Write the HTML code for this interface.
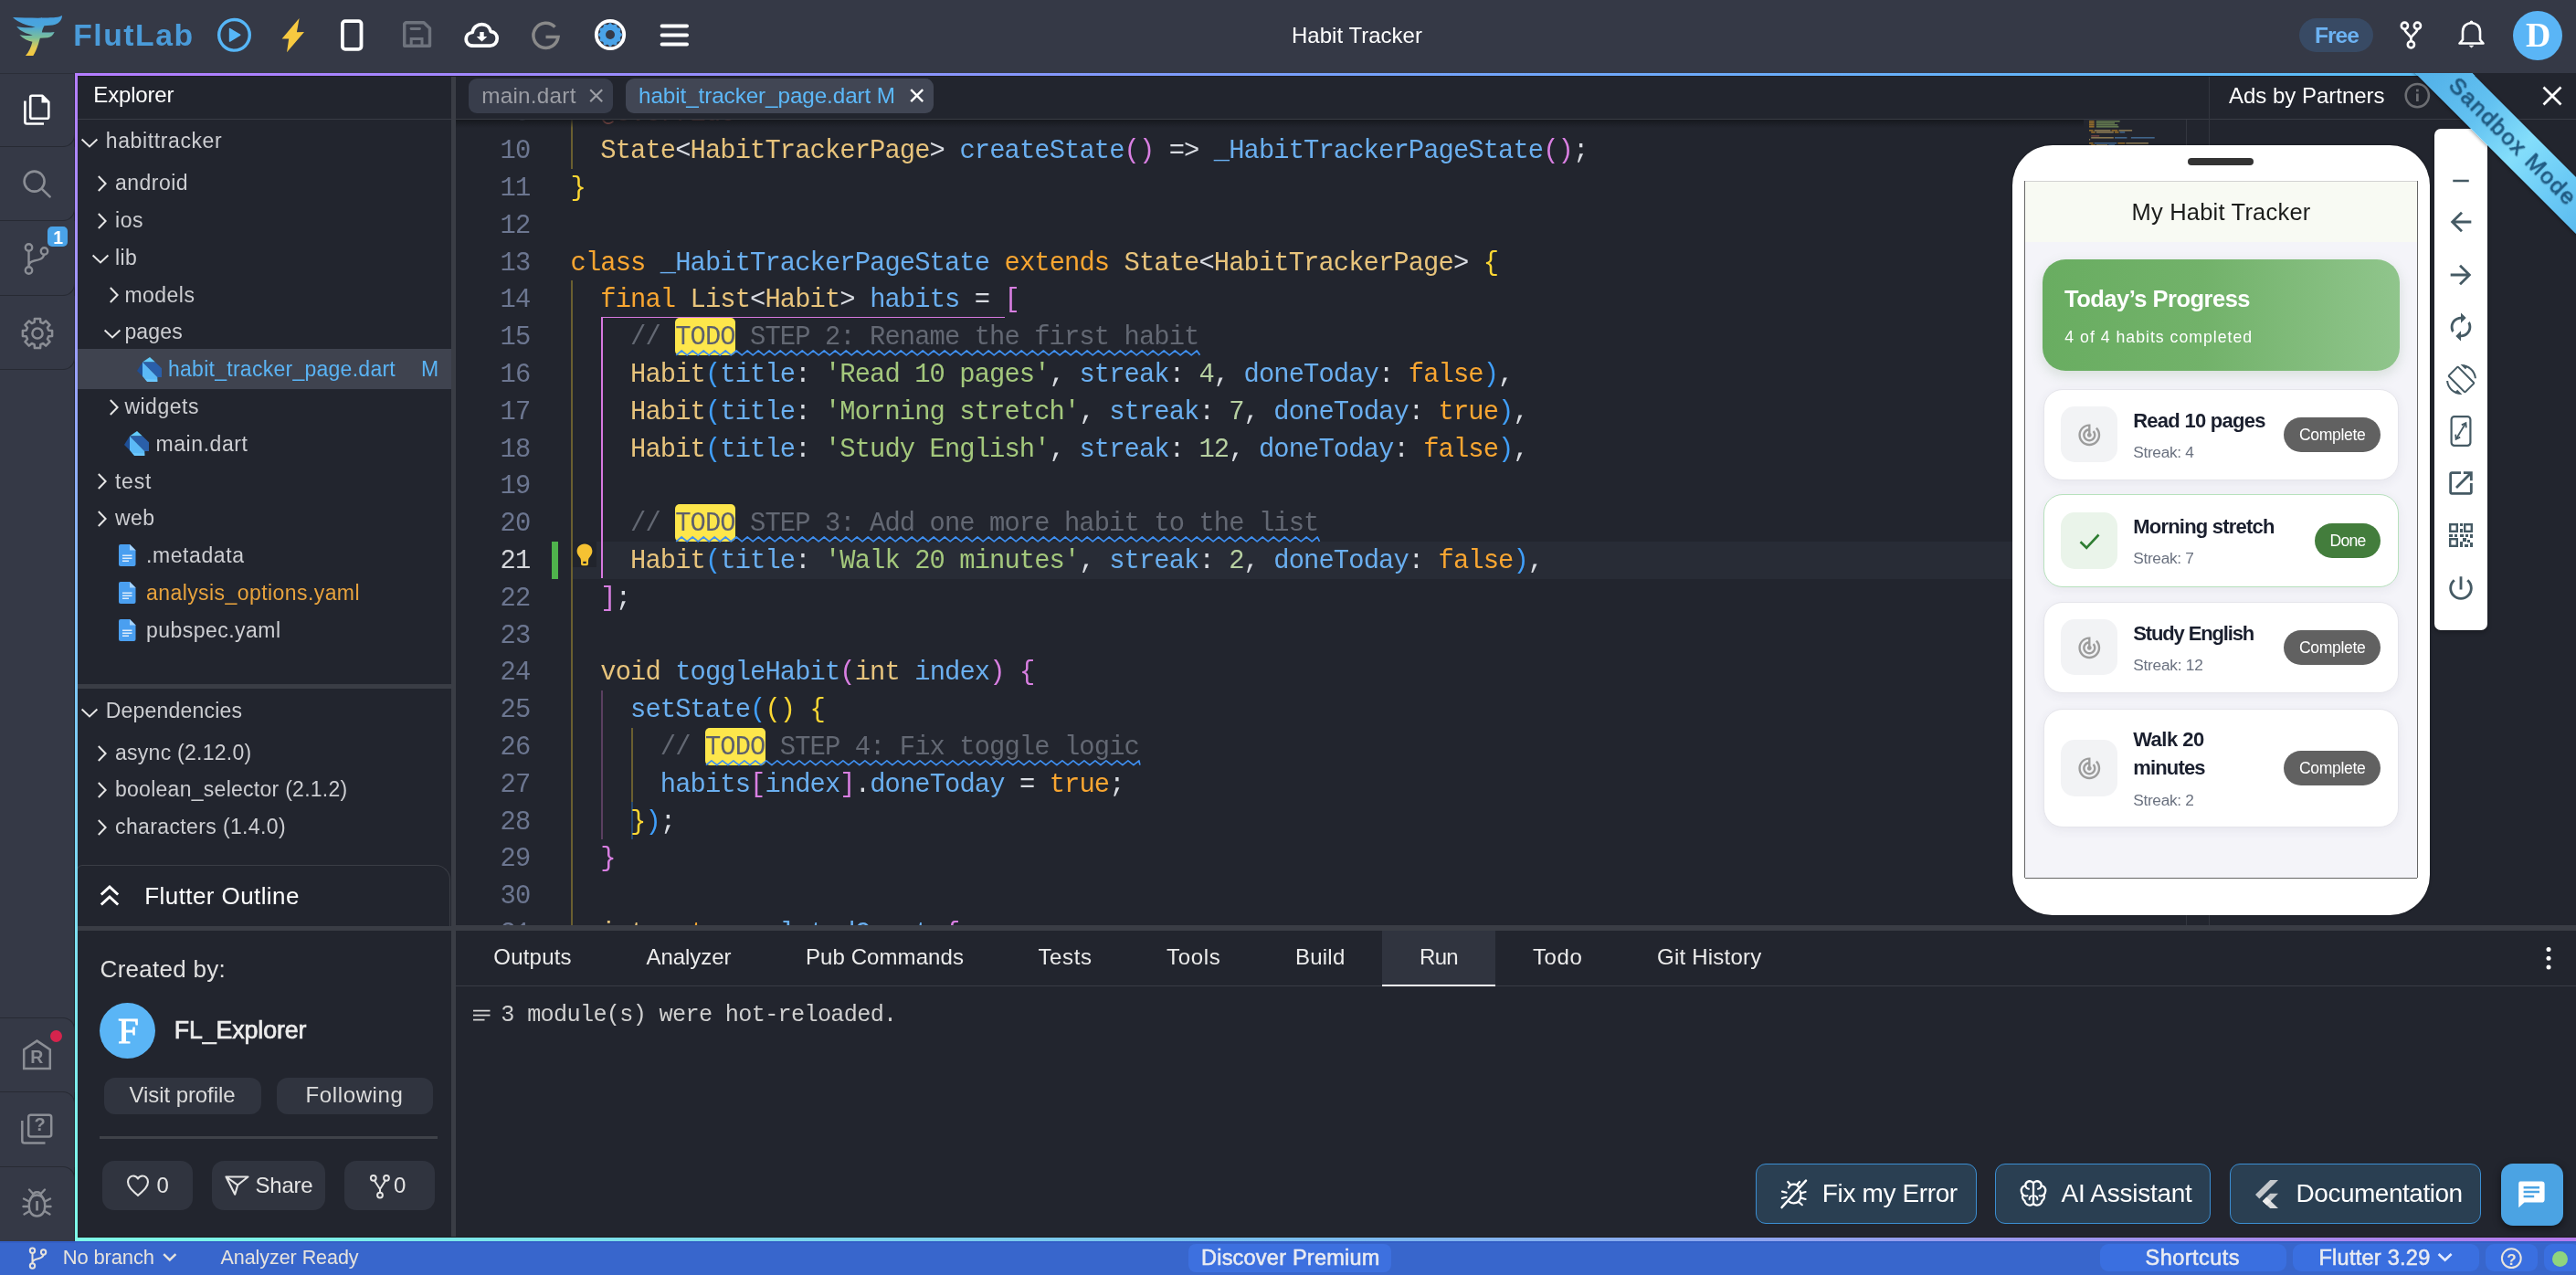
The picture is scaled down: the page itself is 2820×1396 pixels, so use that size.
<!DOCTYPE html>
<html><head><meta charset="utf-8"><title>FlutLab - Habit Tracker</title>
<style>
html,body{margin:0;padding:0;}
body{width:2820px;height:1396px;overflow:hidden;background:#22252e;position:relative;font-family:"Liberation Sans",sans-serif;}
.t{position:absolute;white-space:pre;line-height:1;}
.b{position:absolute;display:block;}
#root{position:absolute;left:0;top:0;width:2820px;height:1396px;overflow:hidden;will-change:transform;}

</style></head><body>
<div id="root">
<!-- p_top -->
<div class="b" style="left:0.0px;top:0.0px;width:2820.0px;height:80.0px;background:#353946;"></div>
<svg class="b" style="left:0.0px;top:0.0px;" width="80.0" height="80.0" viewBox="0 0 858.4 858.4"><defs><linearGradient id="lg" x1="0" y1="0" x2="0" y2="1"><stop offset="0" stop-color="#47a0e2"/><stop offset="0.25" stop-color="#4aa5dc"/><stop offset="0.55" stop-color="#7cbf9a"/><stop offset="0.8" stop-color="#e3cb55"/><stop offset="1" stop-color="#f8c93e"/></linearGradient></defs>
<path fill="url(#lg)" d="M150,205 C320,212 560,214 650,205 C690,200 715,192 730,183 C728,230 700,270 650,288 C610,300 560,302 520,302 C505,325 497,350 492,380 C545,384 600,380 640,375 C625,412 600,436 560,442 C530,446 500,446 470,447 C455,500 440,570 390,655 L300,655 C340,610 365,550 380,490 C330,480 270,455 230,410 C280,420 330,420 385,412 C310,395 235,365 195,310 C260,325 340,330 415,318 C310,300 210,265 150,205 Z"/></svg>
<div class="t" style="left:80.2px;top:21.8px;font-size:33.70px;color:#4a9bd9;font-weight:700;letter-spacing:1.547px;">FlutLab</div>
<svg class="b" style="left:230.0px;top:12.0px;" width="54.0" height="54.0" viewBox="0 0 54 54"><circle cx="26.5" cy="26.3" r="16.8" fill="none" stroke="#56b6f7" stroke-width="3.4"/><path d="M21.6,19.6 L32.6,26.3 L21.6,33 Z" fill="#56b6f7" stroke="#56b6f7" stroke-width="1.6" stroke-linejoin="round"/></svg>
<svg class="b" style="left:300.0px;top:12.0px;" width="44.0" height="54.0" viewBox="0 0 44 54"><path fill="#f7c940" d="M27.6,8.1 L24.9,23.3 L33,23 L14,45.3 L16.2,30.6 L8.6,30.4 Z"/></svg>
<svg class="b" style="left:366.0px;top:14.0px;" width="40.0" height="50.0" viewBox="0 0 40 50"><rect x="8.9" y="9.1" width="20.6" height="30.7" rx="3" fill="none" stroke="#fff" stroke-width="3.8"/></svg>
<svg class="b" style="left:436.0px;top:18.0px;" width="42.0" height="40.0" viewBox="0 0 42 40"><path fill="none" stroke="#6e737d" stroke-width="3.4" stroke-linejoin="round" d="M8.2,6.7 L28,6.7 L34.5,13 L34.5,32.3 L6.7,32.3 L6.7,8.2 Z"/><path d="M14,13.5 L23.5,13.5" stroke="#6e737d" stroke-width="2.8" stroke-linecap="round"/><path fill="none" stroke="#6e737d" stroke-width="3" d="M14.2,32 L14.2,24.5 L26,24.5 L26,32"/></svg>
<svg class="b" style="left:502.0px;top:18.0px;" width="52.0" height="40.0" viewBox="0 0 52 40"><path fill="none" stroke="#fff" stroke-width="3.7" stroke-linejoin="round" d="M16.5,32.2 C10.5,32.2 8.2,28.5 8.2,25 C8.2,21 11,17.8 15.2,17.5 C16,12 20.5,8.7 25.5,8.7 C30.5,8.7 34.3,12 35.3,16.6 C39.5,16.8 42.2,20 42.2,24 C42.2,28.5 39,32.2 34.5,32.2 Z"/><path fill="#fff" d="M23.3,17 L27.7,17 L27.7,22 L31.3,22 L25.5,27.6 L19.7,22 L23.3,22 Z"/></svg>
<svg class="b" style="left:576.0px;top:19.5px;" width="44.0" height="42.0" viewBox="0 0 44 42"><path fill="none" stroke="#898989" stroke-width="3.5" d="M31.5,9.6 A13.6,13.6 0 1 0 35,20.6 L21.5,20.6"/></svg>
<svg class="b" style="left:647.6px;top:18.3px;" width="40.0" height="40.0" viewBox="0 0 40 40"><circle cx="20" cy="20" r="15.2" fill="none" stroke="#fff" stroke-width="3.8"/><path d="M32.87,19.07 L32.87,20.93 L31.10,22.13 L30.68,23.70 L31.61,25.63 L30.68,27.24 L28.54,27.39 L27.39,28.54 L27.24,30.68 L25.63,31.61 L23.70,30.68 L22.13,31.10 L20.93,32.87 L19.07,32.87 L17.87,31.10 L16.30,30.68 L14.37,31.61 L12.76,30.68 L12.61,28.54 L11.46,27.39 L9.32,27.24 L8.39,25.63 L9.32,23.70 L8.90,22.13 L7.13,20.93 L7.13,19.07 L8.90,17.87 L9.32,16.30 L8.39,14.37 L9.32,12.76 L11.46,12.61 L12.61,11.46 L12.76,9.32 L14.37,8.39 L16.30,9.32 L17.87,8.90 L19.07,7.13 L20.93,7.13 L22.13,8.90 L23.70,9.32 L25.63,8.39 L27.24,9.32 L27.39,11.46 L28.54,12.61 L30.68,12.76 L31.61,14.37 L30.68,16.30 L31.10,17.87 Z" fill="#4aa3e8"/><circle cx="20" cy="20" r="5" fill="#353946"/></svg>
<svg class="b" style="left:718.0px;top:22.0px;" width="42.0" height="34.0" viewBox="0 0 42 34"><path stroke="#fff" stroke-width="4" stroke-linecap="round" d="M6.6,6.5 L34,6.5 M6.6,16.4 L34,16.4 M6.6,26.4 L34,26.4"/></svg>
<div class="t" style="left:1414.0px;top:27.3px;font-size:24.00px;color:#fff;letter-spacing:0.022px;">Habit Tracker</div>
<div class="b" style="left:2517.0px;top:20.0px;width:81.0px;height:37.0px;background:#384a64;border-radius:19px;"></div>
<div class="t" style="left:2534.0px;top:27.3px;font-size:24.50px;color:#6cb2f2;font-weight:700;letter-spacing:-0.938px;">Free</div>
<svg class="b" style="left:2622.0px;top:18.0px;" width="36.0" height="42.0" viewBox="0 0 36 42"><g fill="none" stroke="#fff" stroke-width="2.6"><circle cx="10.4" cy="10.2" r="3.6"/><circle cx="24.4" cy="10.2" r="3.6"/><circle cx="17.4" cy="30.8" r="3.6"/><path d="M10.4,13.8 C10.6,18.5 17.4,19.5 17.4,24.6 M24.4,13.8 C24.2,18.5 17.4,19.5 17.4,24.6 L17.4,27.2"/></g></svg>
<svg class="b" style="left:2686.0px;top:18.0px;" width="40.0" height="42.0" viewBox="0 0 40 42"><path fill="none" stroke="#fff" stroke-width="2.6" stroke-linejoin="round" d="M6.5,29.5 L32.5,29.5 L29,25.5 L29,16.5 C29,11 25,7.2 19.5,7.2 C14,7.2 10,11 10,16.5 L10,25.5 Z"/><circle cx="19.5" cy="6.3" r="1.8" fill="#fff"/><path d="M17.5,32.2 L21.5,32.2 L19.5,33.8 Z" fill="#fff" stroke="#fff" stroke-width="1"/></svg>
<div class="b" style="left:2750.6px;top:11.6px;width:54.8px;height:54.8px;background:#5ab5f6;border-radius:50%;"></div>
<div class="t" style="left:2765.0px;top:19.9px;font-size:37.80px;color:#fff;font-weight:700;font-family:'Liberation Serif', serif;">D</div>
<!-- p_side -->
<div class="b" style="left:0.0px;top:80.0px;width:82.0px;height:1279.0px;background:#353946;"></div>
<div class="b" style="left:0.0px;top:80.0px;width:82.0px;height:1.0px;background:#2b2e38;"></div>
<div class="b" style="left:81.0px;top:80.0px;width:1.0px;height:1279.0px;background:#202228;"></div>
<div class="b" style="left:-2px;top:80.0px;width:82px;height:79.5px;border:1px solid #272a33;border-top:none;border-bottom-right-radius:13px;box-sizing:content-box"></div>
<div class="b" style="left:-2px;top:160.5px;width:82px;height:80.5px;border:1px solid #272a33;border-top:none;border-bottom-right-radius:13px;box-sizing:content-box"></div>
<div class="b" style="left:-2px;top:242.0px;width:82px;height:80.5px;border:1px solid #272a33;border-top:none;border-bottom-right-radius:13px;box-sizing:content-box"></div>
<div class="b" style="left:-2px;top:323.5px;width:82px;height:80.5px;border:1px solid #272a33;border-top:none;border-bottom-right-radius:13px;box-sizing:content-box"></div>
<div class="b" style="left:-2px;top:1113.5px;width:82px;height:81.0px;border:1px solid #272a33;border-bottom:none;border-top-right-radius:13px;box-sizing:content-box"></div>
<div class="b" style="left:-2px;top:1194.5px;width:82px;height:82.0px;border:1px solid #272a33;border-bottom:none;border-top-right-radius:13px;box-sizing:content-box"></div>
<div class="b" style="left:-2px;top:1276.5px;width:82px;height:85.5px;border:1px solid #272a33;border-bottom:none;border-top-right-radius:13px;box-sizing:content-box"></div>
<svg class="b" style="left:22.0px;top:100.0px;" width="40.0" height="40.0" viewBox="0 0 40 40"><g fill="none" stroke="#fff" stroke-width="2.6" stroke-linejoin="round"><path d="M13,4.8 L24.5,4.8 L31.3,11.6 L31.3,28 Q31.3,29.8 29.5,29.8 L13,29.8 Q11.2,29.8 11.2,28 L11.2,6.6 Q11.2,4.8 13,4.8 Z"/><path d="M5.4,10.5 L5.4,33.5 Q5.4,35.5 7.4,35.5 L26,35.5"/></g><path d="M23.5,4.8 L31.3,12.6 L23.5,12.6 Z" fill="#fff"/></svg>
<svg class="b" style="left:20.0px;top:182.0px;" width="40.0" height="40.0" viewBox="0 0 40 40"><circle cx="17.6" cy="16.6" r="11" fill="none" stroke="#8b8e95" stroke-width="2.6"/><path d="M25.6,24.6 L34.6,33.4" stroke="#8b8e95" stroke-width="2.6" stroke-linecap="round"/></svg>
<svg class="b" style="left:20.0px;top:262.0px;" width="40.0" height="42.0" viewBox="0 0 40 42"><g fill="none" stroke="#8b8e95" stroke-width="2.4"><circle cx="11.5" cy="9" r="3.7"/><circle cx="11.5" cy="34" r="3.7"/><circle cx="28.5" cy="13" r="3.7"/><path d="M11.5,12.7 L11.5,30.3 M28.2,16.7 C27.5,21.5 23,22.5 17.5,23.5 C13.5,24.3 11.8,26 11.5,29"/></g></svg>
<div class="b" style="left:52.0px;top:248.0px;width:22.0px;height:22.0px;background:#4aa3e8;border-radius:5px;"></div>
<div class="t" style="left:58.2px;top:250.9px;font-size:19.50px;color:#fff;font-weight:700;">1</div>
<svg class="b" style="left:20.5px;top:344.5px;" width="40.0" height="40.0" viewBox="0 0 40 40"><path d="M16.64,7.86 L16.90,3.90 L23.10,3.90 L23.36,7.86 L26.21,9.04 L29.20,6.42 L33.58,10.80 L30.96,13.79 L32.14,16.64 L36.10,16.90 L36.10,23.10 L32.14,23.36 L30.96,26.21 L33.58,29.20 L29.20,33.58 L26.21,30.96 L23.36,32.14 L23.10,36.10 L16.90,36.10 L16.64,32.14 L13.79,30.96 L10.80,33.58 L6.42,29.20 L9.04,26.21 L7.86,23.36 L3.90,23.10 L3.90,16.90 L7.86,16.64 L9.04,13.79 L6.42,10.80 L10.80,6.42 L13.79,9.04 Z" fill="none" stroke="#8b8e95" stroke-width="2.5" stroke-linejoin="round"/><circle cx="20" cy="20" r="5.6" fill="none" stroke="#8b8e95" stroke-width="2.5"/></svg>
<svg class="b" style="left:20.0px;top:1134.0px;" width="42.0" height="42.0" viewBox="0 0 42 42"><path d="M6.2,36 L6.2,15.2 L20.5,5.6 L34.8,15.2 L34.8,36 Z" fill="none" stroke="#8b8e95" stroke-width="2.5"/></svg>
<div class="t" style="left:33.3px;top:1147.5px;font-size:19.50px;color:#8b8e95;font-weight:700;">R</div>
<div class="b" style="left:54.5px;top:1128.0px;width:13.4px;height:13.4px;background:#d6244d;border-radius:50%;"></div>
<svg class="b" style="left:20.0px;top:1216.0px;" width="42.0" height="42.0" viewBox="0 0 42 42"><g fill="none" stroke="#8b8e95" stroke-width="2.5" stroke-linejoin="round"><rect x="11.2" y="4.7" width="25" height="23.8" rx="2.5"/><path d="M4.3,11 L4.3,33 Q4.3,35.6 6.9,35.6 L29.5,35.6"/></g></svg>
<div class="t" style="left:37.6px;top:1220.9px;font-size:20.00px;color:#8b8e95;font-weight:700;">?</div>
<svg class="b" style="left:20.0px;top:1298.0px;" width="42.0" height="40.0" viewBox="0 0 42 40"><g fill="none" stroke="#8b8e95" stroke-width="2.4" stroke-linecap="round"><path d="M20.5,10.5 C26.5,10.5 29.2,15 29.2,22.5 C29.2,29.5 25.5,33.5 20.5,33.5 C15.5,33.5 11.8,29.5 11.8,22.5 C11.8,15 14.5,10.5 20.5,10.5 Z"/><path d="M15.5,11.8 C16,8.5 18,7.2 20.5,7.2 C23,7.2 25,8.5 25.5,11.8"/><path d="M15.5,8.2 L12,4.5 M25.5,8.2 L29,4.5 M11.8,17.5 L6,14.5 M29.2,17.5 L35,14.5 M11.5,23 L5.5,23 M29.5,23 L35.5,23 M12.3,28 L6.5,31.5 M28.7,28 L34.5,31.5"/></g><rect x="19.2" y="17" width="2.7" height="10.5" fill="#8b8e95"/></svg>
<div class="b" style="left:85.0px;top:83.0px;width:409.0px;height:1272.0px;background:#22252e;"></div>
<div class="b" style="left:494.0px;top:84.0px;width:4.5px;height:1271.0px;background:#3a3d45;"></div>
<div class="t" style="left:102.3px;top:92.1px;font-size:24.00px;color:#fff;letter-spacing:-0.171px;">Explorer</div>
<div class="b" style="left:85.0px;top:129.5px;width:409.0px;height:1.5px;background:#3a3d45;"></div>
<svg class="b" style="left:87.3px;top:149.0px;" width="22.0" height="16.0" viewBox="0 0 22 16"><path d="M2.6,3.6 L11,11.4 L19.4,3.6" fill="none" stroke="#e6e6e6" stroke-width="2"/></svg>
<div class="t" style="left:115.8px;top:143.4px;font-size:23.00px;color:#cdced2;letter-spacing:0.611px;">habittracker</div>
<svg class="b" style="left:105.4px;top:190.0px;" width="14.0" height="22.0" viewBox="0 0 14 22"><path d="M2.8,3 L10.6,11 L2.8,19" fill="none" stroke="#e6e6e6" stroke-width="2"/></svg>
<div class="t" style="left:126.0px;top:189.1px;font-size:23.00px;color:#cdced2;letter-spacing:0.468px;">android</div>
<svg class="b" style="left:105.4px;top:230.8px;" width="14.0" height="22.0" viewBox="0 0 14 22"><path d="M2.8,3 L10.6,11 L2.8,19" fill="none" stroke="#e6e6e6" stroke-width="2"/></svg>
<div class="t" style="left:126.0px;top:229.9px;font-size:23.00px;color:#cdced2;letter-spacing:0.533px;">ios</div>
<svg class="b" style="left:99.2px;top:276.1px;" width="22.0" height="16.0" viewBox="0 0 22 16"><path d="M2.6,3.6 L11,11.4 L19.4,3.6" fill="none" stroke="#e6e6e6" stroke-width="2"/></svg>
<div class="t" style="left:126.0px;top:270.7px;font-size:23.00px;color:#cdced2;letter-spacing:0.329px;">lib</div>
<svg class="b" style="left:117.7px;top:312.4px;" width="14.0" height="22.0" viewBox="0 0 14 22"><path d="M2.8,3 L10.6,11 L2.8,19" fill="none" stroke="#e6e6e6" stroke-width="2"/></svg>
<div class="t" style="left:136.4px;top:311.5px;font-size:23.00px;color:#cdced2;letter-spacing:0.476px;">models</div>
<svg class="b" style="left:111.5px;top:357.7px;" width="22.0" height="16.0" viewBox="0 0 22 16"><path d="M2.6,3.6 L11,11.4 L19.4,3.6" fill="none" stroke="#e6e6e6" stroke-width="2"/></svg>
<div class="t" style="left:136.4px;top:352.3px;font-size:23.00px;color:#cdced2;letter-spacing:0.167px;">pages</div>
<div class="b" style="left:85.0px;top:382.0px;width:409.0px;height:43.5px;background:#3f434f;"></div>
<svg class="b" style="left:150.2px;top:391.0px;" width="27.0" height="27.0" viewBox="0 0 27 27"><polygon points="6,5.5 14,0 20,5.5" fill="#62cbfa"/>
<polygon points="6,5.5 20,5.5 27,12.3 27,22 22.3,22" fill="#2a5fa9"/>
<polygon points="0,15 6,5.5 6,21" fill="#1f4f95"/>
<polygon points="6,5.5 22.3,22 22.3,27 11.2,27 6,21" fill="#5bb9f6"/>
<polygon points="6,21 11.2,27 22.3,27 22.3,24.5 9,24" fill="#72cdff" opacity="0.7"/></svg>
<div class="t" style="left:184.0px;top:393.1px;font-size:23.00px;color:#5ab4f5;letter-spacing:0.264px;">habit_tracker_page.dart</div>
<div class="t" style="left:461.0px;top:393.1px;font-size:23.00px;color:#5ab4f5;">M</div>
<svg class="b" style="left:117.7px;top:434.8px;" width="14.0" height="22.0" viewBox="0 0 14 22"><path d="M2.8,3 L10.6,11 L2.8,19" fill="none" stroke="#e6e6e6" stroke-width="2"/></svg>
<div class="t" style="left:136.4px;top:433.9px;font-size:23.00px;color:#cdced2;letter-spacing:0.502px;">widgets</div>
<svg class="b" style="left:136.2px;top:472.0px;" width="27.0" height="27.0" viewBox="0 0 27 27"><polygon points="6,5.5 14,0 20,5.5" fill="#62cbfa"/>
<polygon points="6,5.5 20,5.5 27,12.3 27,22 22.3,22" fill="#2a5fa9"/>
<polygon points="0,15 6,5.5 6,21" fill="#1f4f95"/>
<polygon points="6,5.5 22.3,22 22.3,27 11.2,27 6,21" fill="#5bb9f6"/>
<polygon points="6,21 11.2,27 22.3,27 22.3,24.5 9,24" fill="#72cdff" opacity="0.7"/></svg>
<div class="t" style="left:170.5px;top:474.7px;font-size:23.00px;color:#cdced2;letter-spacing:0.569px;">main.dart</div>
<svg class="b" style="left:105.4px;top:516.4px;" width="14.0" height="22.0" viewBox="0 0 14 22"><path d="M2.8,3 L10.6,11 L2.8,19" fill="none" stroke="#e6e6e6" stroke-width="2"/></svg>
<div class="t" style="left:126.0px;top:515.5px;font-size:23.00px;color:#cdced2;letter-spacing:0.732px;">test</div>
<svg class="b" style="left:105.4px;top:557.2px;" width="14.0" height="22.0" viewBox="0 0 14 22"><path d="M2.8,3 L10.6,11 L2.8,19" fill="none" stroke="#e6e6e6" stroke-width="2"/></svg>
<div class="t" style="left:126.0px;top:556.3px;font-size:23.00px;color:#cdced2;letter-spacing:0.436px;">web</div>
<svg class="b" style="left:130.3px;top:596.3px;" width="19.0" height="24.0" viewBox="0 0 19 24"><path d="M2,0 L12,0 L18.5,6.5 L18.5,22 Q18.5,24 16.5,24 L2,24 Q0,24 0,22 L0,2 Q0,0 2,0 Z" fill="#4a9ff0"/>
<path d="M12,0 L18.5,6.5 L12,6.5 Z" fill="#a8d4fa"/>
<path d="M4,12.2 L14.5,12.2 M4,15.2 L14.5,15.2 M4,18.2 L11,18.2" stroke="#dcecfb" stroke-width="1.5"/></svg>
<div class="t" style="left:160.0px;top:597.1px;font-size:23.00px;color:#cdced2;letter-spacing:0.579px;">.metadata</div>
<svg class="b" style="left:130.3px;top:637.1px;" width="19.0" height="24.0" viewBox="0 0 19 24"><path d="M2,0 L12,0 L18.5,6.5 L18.5,22 Q18.5,24 16.5,24 L2,24 Q0,24 0,22 L0,2 Q0,0 2,0 Z" fill="#4a9ff0"/>
<path d="M12,0 L18.5,6.5 L12,6.5 Z" fill="#a8d4fa"/>
<path d="M4,12.2 L14.5,12.2 M4,15.2 L14.5,15.2 M4,18.2 L11,18.2" stroke="#dcecfb" stroke-width="1.5"/></svg>
<div class="t" style="left:160.0px;top:637.9px;font-size:23.00px;color:#e8a33d;letter-spacing:0.428px;">analysis_options.yaml</div>
<svg class="b" style="left:130.3px;top:677.9px;" width="19.0" height="24.0" viewBox="0 0 19 24"><path d="M2,0 L12,0 L18.5,6.5 L18.5,22 Q18.5,24 16.5,24 L2,24 Q0,24 0,22 L0,2 Q0,0 2,0 Z" fill="#4a9ff0"/>
<path d="M12,0 L18.5,6.5 L12,6.5 Z" fill="#a8d4fa"/>
<path d="M4,12.2 L14.5,12.2 M4,15.2 L14.5,15.2 M4,18.2 L11,18.2" stroke="#dcecfb" stroke-width="1.5"/></svg>
<div class="t" style="left:160.0px;top:678.7px;font-size:23.00px;color:#cdced2;letter-spacing:0.466px;">pubspec.yaml</div>
<div class="b" style="left:85.0px;top:748.5px;width:409.0px;height:5.5px;background:#3a3d45;"></div>
<svg class="b" style="left:87.3px;top:773.0px;" width="22.0" height="16.0" viewBox="0 0 22 16"><path d="M2.6,3.6 L11,11.4 L19.4,3.6" fill="none" stroke="#e6e6e6" stroke-width="2"/></svg>
<div class="t" style="left:115.8px;top:767.1px;font-size:23.00px;color:#cdced2;letter-spacing:0.204px;">Dependencies</div>
<svg class="b" style="left:105.4px;top:813.5px;" width="14.0" height="22.0" viewBox="0 0 14 22"><path d="M2.8,3 L10.6,11 L2.8,19" fill="none" stroke="#e6e6e6" stroke-width="2"/></svg>
<div class="t" style="left:126.0px;top:812.6px;font-size:23.00px;color:#cdced2;letter-spacing:0.269px;">async (2.12.0)</div>
<svg class="b" style="left:105.4px;top:854.3px;" width="14.0" height="22.0" viewBox="0 0 14 22"><path d="M2.8,3 L10.6,11 L2.8,19" fill="none" stroke="#e6e6e6" stroke-width="2"/></svg>
<div class="t" style="left:126.0px;top:853.4px;font-size:23.00px;color:#cdced2;letter-spacing:0.269px;">boolean_selector (2.1.2)</div>
<svg class="b" style="left:105.4px;top:895.1px;" width="14.0" height="22.0" viewBox="0 0 14 22"><path d="M2.8,3 L10.6,11 L2.8,19" fill="none" stroke="#e6e6e6" stroke-width="2"/></svg>
<div class="t" style="left:126.0px;top:894.2px;font-size:23.00px;color:#cdced2;letter-spacing:0.376px;">characters (1.4.0)</div>
<div class="b" style="left:84px;top:947px;width:409px;height:70px;border:1.5px solid #3a3d45;border-bottom:none;border-top-right-radius:16px;border-top-left-radius:6px;box-sizing:border-box"></div>
<svg class="b" style="left:108.0px;top:966.5px;" width="24.0" height="30.0" viewBox="0 0 24 30"><path d="M2.8,12.5 L12,4 L21.2,12.5 M2.8,23.5 L12,15 L21.2,23.5" fill="none" stroke="#fff" stroke-width="3"/></svg>
<div class="t" style="left:158.3px;top:968.3px;font-size:26.00px;color:#fff;letter-spacing:0.414px;">Flutter Outline</div>
<div class="b" style="left:85.0px;top:1014.0px;width:409.0px;height:5.0px;background:#3a3d45;"></div>
<div class="t" style="left:109.6px;top:1047.8px;font-size:26.00px;color:#e2e2e2;letter-spacing:0.281px;">Created by:</div>
<div class="b" style="left:109.2px;top:1098.0px;width:61.0px;height:61.0px;background:#5ab5f6;border-radius:50%;"></div>
<div class="t" style="left:129.0px;top:1108.0px;font-size:41.00px;color:#fff;font-family:'Liberation Serif', serif;-webkit-text-stroke:0.9px #fff;">F</div>
<div class="t" style="left:190.8px;top:1115.1px;font-size:26.80px;color:#ececec;letter-spacing:-0.134px;-webkit-text-stroke:0.7px #ececec;">FL_Explorer</div>
<div class="b" style="left:114.0px;top:1179.8px;width:171.5px;height:40.3px;background:#30343f;border-radius:12px;"></div>
<div class="t" style="left:141.5px;top:1187.3px;font-size:24.00px;color:#dcdcdc;letter-spacing:-0.072px;">Visit profile</div>
<div class="b" style="left:303.0px;top:1179.8px;width:170.5px;height:40.3px;background:#30343f;border-radius:12px;"></div>
<div class="t" style="left:334.5px;top:1186.7px;font-size:24.00px;color:#dcdcdc;letter-spacing:0.624px;">Following</div>
<div class="b" style="left:109.0px;top:1244.3px;width:370.0px;height:3.0px;background:#3f4249;"></div>
<div class="b" style="left:112.0px;top:1271.0px;width:99.0px;height:54.0px;background:#30343f;border-radius:13px;"></div>
<svg class="b" style="left:137.0px;top:1283.0px;" width="30.0" height="30.0" viewBox="0 0 30 30"><path d="M14,26 C8,20.5 3,16.5 3,11 C3,7 6,4.5 9,4.5 C11.2,4.5 13,5.7 14,7.6 C15,5.7 16.8,4.5 19,4.5 C22,4.5 25,7 25,11 C25,16.5 20,20.5 14,26 Z" fill="none" stroke="#e4e4e4" stroke-width="2.1" stroke-linejoin="round"/></svg>
<div class="t" style="left:171.5px;top:1285.7px;font-size:24.00px;color:#e4e4e4;">0</div>
<div class="b" style="left:232.0px;top:1271.0px;width:124.0px;height:54.0px;background:#30343f;border-radius:13px;"></div>
<svg class="b" style="left:244.0px;top:1284.0px;" width="32.0" height="30.0" viewBox="0 0 32 30"><path d="M3.5,4.5 L27.5,4.5 L16.2,13.5 L13.2,23.8 Z M16.2,13.5 L3.5,4.5" fill="none" stroke="#e4e4e4" stroke-width="2.1" stroke-linejoin="round"/></svg>
<div class="t" style="left:279.5px;top:1285.7px;font-size:24.00px;color:#e4e4e4;letter-spacing:-0.209px;">Share</div>
<div class="b" style="left:376.5px;top:1271.0px;width:99.5px;height:54.0px;background:#30343f;border-radius:13px;"></div>
<svg class="b" style="left:402.0px;top:1283.0px;" width="28.0" height="32.0" viewBox="0 0 28 32"><g fill="none" stroke="#e4e4e4" stroke-width="2"><circle cx="6.8" cy="6.8" r="2.9"/><circle cx="21" cy="6.8" r="2.9"/><circle cx="14" cy="25.6" r="2.9"/><path d="M7.8,9.5 L14,19 L20,9.5 M14,18.5 L14,22.7"/></g></svg>
<div class="t" style="left:431.0px;top:1285.7px;font-size:24.00px;color:#e4e4e4;">0</div>
<!-- p_editor -->
<div class="b" style="left:498.5px;top:83px;width:2321.5px;height:930.3px;background:#22252e;overflow:hidden">
<div class="b" style="left:126.5px;top:509.7px;width:1768.0px;height:41.1px;background:#282c36;"></div>
<div class="b" style="left:126.5px;top:37.0px;width:2.0px;height:64.7px;background:#6a5f30;"></div>
<div class="b" style="left:126.5px;top:224.1px;width:2.0px;height:712.9px;background:#6a5f30;"></div>
<div class="b" style="left:159.3px;top:672.9px;width:2.0px;height:163.2px;background:#5a3f60;"></div>
<div class="b" style="left:192.0px;top:713.7px;width:2.0px;height:81.6px;background:#6a5f30;"></div>
<div class="b" style="left:192.0px;top:795.3px;width:2.0px;height:40.8px;background:#274a72;"></div>
<div class="b" style="left:159.3px;top:264.1px;width:2.0px;height:286.4px;background:#d678de;"></div>
<div class="b" style="left:159.3px;top:264.1px;width:441.8px;height:1.2px;background:#d678de;"></div>
<div class="b" style="left:105.5px;top:509.7px;width:6.5px;height:41.1px;background:#4fb34c;"></div>
<div class="b" style="left:128.5px;top:509.7px;width:26.0px;height:28.0px;background:#21242c;"></div>
<svg class="b" style="left:130.5px;top:510.9px" width="22" height="28" viewBox="0 0 22 28"><path d="M11,1.5 C5.8,1.5 2.6,5.2 2.6,9.6 C2.6,12.6 4.2,14.6 5.6,16.2 C6.6,17.4 6.8,18.2 6.8,19.2 L15.2,19.2 C15.2,18.2 15.4,17.4 16.4,16.2 C17.8,14.6 19.4,12.6 19.4,9.6 C19.4,5.2 16.2,1.5 11,1.5 Z" fill="#f6c232"/><path d="M7,19 L7,23.5 Q7,25.3 8.8,25.3 L13.2,25.3 Q15,25.3 15,23.5 L15,19 Z M9.3,20.8 L12.7,20.8 L12.7,23 L9.3,23 Z" fill="#f6c232" fill-rule="evenodd"/></svg>
<div class="t" style="left:65.4px;top:28.3px;font-size:28.80px;color:#6c7690;font-family:'Liberation Mono', monospace;letter-spacing:-0.903px;">9</div>
<div class="t" style="left:126.0px;top:28.3px;font-size:28.80px;font-family:'Liberation Mono', monospace;color:#d9dce2;letter-spacing:-0.903px">  <span style="color:#b5645b">@override</span></div>
<div class="t" style="left:49.0px;top:69.1px;font-size:28.80px;color:#6c7690;font-family:'Liberation Mono', monospace;letter-spacing:-0.903px;">10</div>
<div class="t" style="left:126.0px;top:69.1px;font-size:28.80px;font-family:'Liberation Mono', monospace;color:#d9dce2;letter-spacing:-0.903px">  <span style="color:#e8c47c">State</span><span style="color:#d9dce2">&lt;</span><span style="color:#e8c47c">HabitTrackerPage</span><span style="color:#d9dce2">&gt;</span> <span style="color:#6aaff0">createState</span><span style="color:#d97fe2">()</span><span style="color:#d9dce2"> =&gt; </span><span style="color:#6aaff0">_HabitTrackerPageState</span><span style="color:#d97fe2">()</span><span style="color:#d9dce2">;</span></div>
<div class="t" style="left:49.0px;top:109.9px;font-size:28.80px;color:#6c7690;font-family:'Liberation Mono', monospace;letter-spacing:-0.903px;">11</div>
<div class="t" style="left:126.0px;top:109.9px;font-size:28.80px;font-family:'Liberation Mono', monospace;color:#d9dce2;letter-spacing:-0.903px"><span style="color:#fcd733">}</span></div>
<div class="t" style="left:49.0px;top:150.7px;font-size:28.80px;color:#6c7690;font-family:'Liberation Mono', monospace;letter-spacing:-0.903px;">12</div>
<div class="t" style="left:49.0px;top:191.5px;font-size:28.80px;color:#6c7690;font-family:'Liberation Mono', monospace;letter-spacing:-0.903px;">13</div>
<div class="t" style="left:126.0px;top:191.5px;font-size:28.80px;font-family:'Liberation Mono', monospace;color:#d9dce2;letter-spacing:-0.903px"><span style="color:#f9a631">class</span> <span style="color:#6aaff0">_HabitTrackerPageState</span> <span style="color:#f9a631">extends</span> <span style="color:#e8c47c">State</span><span style="color:#d9dce2">&lt;</span><span style="color:#e8c47c">HabitTrackerPage</span><span style="color:#d9dce2">&gt;</span> <span style="color:#fcd733">{</span></div>
<div class="t" style="left:49.0px;top:232.3px;font-size:28.80px;color:#6c7690;font-family:'Liberation Mono', monospace;letter-spacing:-0.903px;">14</div>
<div class="t" style="left:126.0px;top:232.3px;font-size:28.80px;font-family:'Liberation Mono', monospace;color:#d9dce2;letter-spacing:-0.903px">  <span style="color:#f9a631">final</span> <span style="color:#e8c47c">List</span><span style="color:#d9dce2">&lt;</span><span style="color:#e8c47c">Habit</span><span style="color:#d9dce2">&gt;</span> <span style="color:#6aaff0">habits</span><span style="color:#d9dce2"> = </span><span style="color:#d97fe2">[</span></div>
<div class="t" style="left:49.0px;top:273.1px;font-size:28.80px;color:#6c7690;font-family:'Liberation Mono', monospace;letter-spacing:-0.903px;">15</div>
<div class="b" style="left:240.9px;top:265.2px;width:66.1px;height:40.8px;background:#fde64b;border-radius:5px;"></div>
<div class="t" style="left:126.0px;top:273.1px;font-size:28.80px;font-family:'Liberation Mono', monospace;color:#d9dce2;letter-spacing:-0.903px">    <span style="color:#636873">// </span><span style="color:#5d606c">TODO</span><span style="color:#636873"> STEP 2: Rename the first habit</span></div>
<div class="t" style="left:49.0px;top:313.9px;font-size:28.80px;color:#6c7690;font-family:'Liberation Mono', monospace;letter-spacing:-0.903px;">16</div>
<div class="t" style="left:126.0px;top:313.9px;font-size:28.80px;font-family:'Liberation Mono', monospace;color:#d9dce2;letter-spacing:-0.903px">    <span style="color:#e8c47c">Habit</span><span style="color:#409ffa">(</span><span style="color:#6aaff0">title</span><span style="color:#d9dce2">: </span><span style="color:#a4c87c">'Read 10 pages'</span><span style="color:#d9dce2">, </span><span style="color:#6aaff0">streak</span><span style="color:#d9dce2">: </span><span style="color:#b7d0a1">4</span><span style="color:#d9dce2">, </span><span style="color:#6aaff0">doneToday</span><span style="color:#d9dce2">: </span><span style="color:#f9a631">false</span><span style="color:#409ffa">)</span><span style="color:#d9dce2">,</span></div>
<div class="t" style="left:49.0px;top:354.7px;font-size:28.80px;color:#6c7690;font-family:'Liberation Mono', monospace;letter-spacing:-0.903px;">17</div>
<div class="t" style="left:126.0px;top:354.7px;font-size:28.80px;font-family:'Liberation Mono', monospace;color:#d9dce2;letter-spacing:-0.903px">    <span style="color:#e8c47c">Habit</span><span style="color:#409ffa">(</span><span style="color:#6aaff0">title</span><span style="color:#d9dce2">: </span><span style="color:#a4c87c">'Morning stretch'</span><span style="color:#d9dce2">, </span><span style="color:#6aaff0">streak</span><span style="color:#d9dce2">: </span><span style="color:#b7d0a1">7</span><span style="color:#d9dce2">, </span><span style="color:#6aaff0">doneToday</span><span style="color:#d9dce2">: </span><span style="color:#f9a631">true</span><span style="color:#409ffa">)</span><span style="color:#d9dce2">,</span></div>
<div class="t" style="left:49.0px;top:395.5px;font-size:28.80px;color:#6c7690;font-family:'Liberation Mono', monospace;letter-spacing:-0.903px;">18</div>
<div class="t" style="left:126.0px;top:395.5px;font-size:28.80px;font-family:'Liberation Mono', monospace;color:#d9dce2;letter-spacing:-0.903px">    <span style="color:#e8c47c">Habit</span><span style="color:#409ffa">(</span><span style="color:#6aaff0">title</span><span style="color:#d9dce2">: </span><span style="color:#a4c87c">'Study English'</span><span style="color:#d9dce2">, </span><span style="color:#6aaff0">streak</span><span style="color:#d9dce2">: </span><span style="color:#b7d0a1">12</span><span style="color:#d9dce2">, </span><span style="color:#6aaff0">doneToday</span><span style="color:#d9dce2">: </span><span style="color:#f9a631">false</span><span style="color:#409ffa">)</span><span style="color:#d9dce2">,</span></div>
<div class="t" style="left:49.0px;top:436.3px;font-size:28.80px;color:#6c7690;font-family:'Liberation Mono', monospace;letter-spacing:-0.903px;">19</div>
<div class="t" style="left:49.0px;top:477.1px;font-size:28.80px;color:#6c7690;font-family:'Liberation Mono', monospace;letter-spacing:-0.903px;">20</div>
<div class="b" style="left:240.9px;top:469.2px;width:66.1px;height:40.8px;background:#fde64b;border-radius:5px;"></div>
<div class="t" style="left:126.0px;top:477.1px;font-size:28.80px;font-family:'Liberation Mono', monospace;color:#d9dce2;letter-spacing:-0.903px">    <span style="color:#636873">// </span><span style="color:#5d606c">TODO</span><span style="color:#636873"> STEP 3: Add one more habit to the list</span></div>
<div class="t" style="left:49.0px;top:517.9px;font-size:28.80px;color:#d4d6da;font-family:'Liberation Mono', monospace;letter-spacing:-0.903px;">21</div>
<div class="t" style="left:126.0px;top:517.9px;font-size:28.80px;font-family:'Liberation Mono', monospace;color:#d9dce2;letter-spacing:-0.903px">    <span style="color:#e8c47c">Habit</span><span style="color:#409ffa">(</span><span style="color:#6aaff0">title</span><span style="color:#d9dce2">: </span><span style="color:#a4c87c">'Walk 20 minutes'</span><span style="color:#d9dce2">, </span><span style="color:#6aaff0">streak</span><span style="color:#d9dce2">: </span><span style="color:#b7d0a1">2</span><span style="color:#d9dce2">, </span><span style="color:#6aaff0">doneToday</span><span style="color:#d9dce2">: </span><span style="color:#f9a631">false</span><span style="color:#409ffa">)</span><span style="color:#d9dce2">,</span></div>
<div class="t" style="left:49.0px;top:558.7px;font-size:28.80px;color:#6c7690;font-family:'Liberation Mono', monospace;letter-spacing:-0.903px;">22</div>
<div class="t" style="left:126.0px;top:558.7px;font-size:28.80px;font-family:'Liberation Mono', monospace;color:#d9dce2;letter-spacing:-0.903px">  <span style="color:#d97fe2">]</span><span style="color:#d9dce2">;</span></div>
<div class="t" style="left:49.0px;top:599.5px;font-size:28.80px;color:#6c7690;font-family:'Liberation Mono', monospace;letter-spacing:-0.903px;">23</div>
<div class="t" style="left:49.0px;top:640.3px;font-size:28.80px;color:#6c7690;font-family:'Liberation Mono', monospace;letter-spacing:-0.903px;">24</div>
<div class="t" style="left:126.0px;top:640.3px;font-size:28.80px;font-family:'Liberation Mono', monospace;color:#d9dce2;letter-spacing:-0.903px">  <span style="color:#e8c47c">void</span> <span style="color:#6aaff0">toggleHabit</span><span style="color:#d97fe2">(</span><span style="color:#e8c47c">int</span> <span style="color:#6aaff0">index</span><span style="color:#d97fe2">)</span> <span style="color:#d97fe2">{</span></div>
<div class="t" style="left:49.0px;top:681.1px;font-size:28.80px;color:#6c7690;font-family:'Liberation Mono', monospace;letter-spacing:-0.903px;">25</div>
<div class="t" style="left:126.0px;top:681.1px;font-size:28.80px;font-family:'Liberation Mono', monospace;color:#d9dce2;letter-spacing:-0.903px">    <span style="color:#6aaff0">setState</span><span style="color:#409ffa">(</span><span style="color:#fcd733">()</span> <span style="color:#fcd733">{</span></div>
<div class="t" style="left:49.0px;top:721.9px;font-size:28.80px;color:#6c7690;font-family:'Liberation Mono', monospace;letter-spacing:-0.903px;">26</div>
<div class="b" style="left:273.6px;top:714.0px;width:66.1px;height:40.8px;background:#fde64b;border-radius:5px;"></div>
<div class="t" style="left:126.0px;top:721.9px;font-size:28.80px;font-family:'Liberation Mono', monospace;color:#d9dce2;letter-spacing:-0.903px">      <span style="color:#636873">// </span><span style="color:#5d606c">TODO</span><span style="color:#636873"> STEP 4: Fix toggle logic</span></div>
<div class="t" style="left:49.0px;top:762.7px;font-size:28.80px;color:#6c7690;font-family:'Liberation Mono', monospace;letter-spacing:-0.903px;">27</div>
<div class="t" style="left:126.0px;top:762.7px;font-size:28.80px;font-family:'Liberation Mono', monospace;color:#d9dce2;letter-spacing:-0.903px">      <span style="color:#6aaff0">habits</span><span style="color:#d97fe2">[</span><span style="color:#6aaff0">index</span><span style="color:#d97fe2">]</span><span style="color:#d9dce2">.</span><span style="color:#6aaff0">doneToday</span><span style="color:#d9dce2"> = </span><span style="color:#f9a631">true</span><span style="color:#d9dce2">;</span></div>
<div class="t" style="left:49.0px;top:803.5px;font-size:28.80px;color:#6c7690;font-family:'Liberation Mono', monospace;letter-spacing:-0.903px;">28</div>
<div class="t" style="left:126.0px;top:803.5px;font-size:28.80px;font-family:'Liberation Mono', monospace;color:#d9dce2;letter-spacing:-0.903px">    <span style="color:#fcd733">}</span><span style="color:#409ffa">)</span><span style="color:#d9dce2">;</span></div>
<div class="t" style="left:49.0px;top:844.3px;font-size:28.80px;color:#6c7690;font-family:'Liberation Mono', monospace;letter-spacing:-0.903px;">29</div>
<div class="t" style="left:126.0px;top:844.3px;font-size:28.80px;font-family:'Liberation Mono', monospace;color:#d9dce2;letter-spacing:-0.903px">  <span style="color:#d97fe2">}</span></div>
<div class="t" style="left:49.0px;top:885.1px;font-size:28.80px;color:#6c7690;font-family:'Liberation Mono', monospace;letter-spacing:-0.903px;">30</div>
<div class="t" style="left:49.0px;top:925.9px;font-size:28.80px;color:#6c7690;font-family:'Liberation Mono', monospace;letter-spacing:-0.903px;">31</div>
<div class="t" style="left:126.0px;top:925.9px;font-size:28.80px;font-family:'Liberation Mono', monospace;color:#d9dce2;letter-spacing:-0.903px">  <span style="color:#e8c47c">int</span> <span style="color:#f9a631">get</span> <span style="color:#6aaff0">completedCount</span> <span style="color:#d97fe2">{</span></div>
<svg class="b" style="left:0;top:0" width="2321" height="931" viewBox="0 0 2321 931"><g fill="none" stroke="#3f8ff0" stroke-width="1.7" stroke-linejoin="round"><path d="M241.2,305.8 L247.2,301.0 L253.2,305.8 L259.2,301.0 L265.2,305.8 L271.2,301.0 L277.2,305.8 L283.2,301.0 L289.2,305.8 L295.2,301.0 L301.2,305.8 L307.2,301.0 L313.2,305.8 L319.2,301.0 L325.2,305.8 L331.2,301.0 L337.2,305.8 L343.2,301.0 L349.2,305.8 L355.2,301.0 L361.2,305.8 L367.2,301.0 L373.2,305.8 L379.2,301.0 L385.2,305.8 L391.2,301.0 L397.2,305.8 L403.2,301.0 L409.2,305.8 L415.2,301.0 L421.2,305.8 L427.2,301.0 L433.2,305.8 L439.2,301.0 L445.2,305.8 L451.2,301.0 L457.2,305.8 L463.2,301.0 L469.2,305.8 L475.2,301.0 L481.2,305.8 L487.2,301.0 L493.2,305.8 L499.2,301.0 L505.2,305.8 L511.2,301.0 L517.2,305.8 L523.2,301.0 L529.2,305.8 L535.2,301.0 L541.2,305.8 L547.2,301.0 L553.2,305.8 L559.2,301.0 L565.2,305.8 L571.2,301.0 L577.2,305.8 L583.2,301.0 L589.2,305.8 L595.2,301.0 L601.2,305.8 L607.2,301.0 L613.2,305.8 L619.2,301.0 L625.2,305.8 L631.2,301.0 L637.2,305.8 L643.2,301.0 L649.2,305.8 L655.2,301.0 L661.2,305.8 L667.2,301.0 L673.2,305.8 L679.2,301.0 L685.2,305.8 L691.2,301.0 L697.2,305.8 L703.2,301.0 L709.2,305.8 L715.2,301.0 L721.2,305.8 L727.2,301.0 L733.2,305.8 L739.2,301.0 L745.2,305.8 L751.2,301.0 L757.2,305.8 L763.2,301.0 L769.2,305.8 L775.2,301.0 L781.2,305.8 L787.2,301.0 L793.2,305.8 L799.2,301.0 L805.2,305.8 L811.2,301.0 L814.5,305.8"/><path d="M241.2,509.8 L247.2,505.0 L253.2,509.8 L259.2,505.0 L265.2,509.8 L271.2,505.0 L277.2,509.8 L283.2,505.0 L289.2,509.8 L295.2,505.0 L301.2,509.8 L307.2,505.0 L313.2,509.8 L319.2,505.0 L325.2,509.8 L331.2,505.0 L337.2,509.8 L343.2,505.0 L349.2,509.8 L355.2,505.0 L361.2,509.8 L367.2,505.0 L373.2,509.8 L379.2,505.0 L385.2,509.8 L391.2,505.0 L397.2,509.8 L403.2,505.0 L409.2,509.8 L415.2,505.0 L421.2,509.8 L427.2,505.0 L433.2,509.8 L439.2,505.0 L445.2,509.8 L451.2,505.0 L457.2,509.8 L463.2,505.0 L469.2,509.8 L475.2,505.0 L481.2,509.8 L487.2,505.0 L493.2,509.8 L499.2,505.0 L505.2,509.8 L511.2,505.0 L517.2,509.8 L523.2,505.0 L529.2,509.8 L535.2,505.0 L541.2,509.8 L547.2,505.0 L553.2,509.8 L559.2,505.0 L565.2,509.8 L571.2,505.0 L577.2,509.8 L583.2,505.0 L589.2,509.8 L595.2,505.0 L601.2,509.8 L607.2,505.0 L613.2,509.8 L619.2,505.0 L625.2,509.8 L631.2,505.0 L637.2,509.8 L643.2,505.0 L649.2,509.8 L655.2,505.0 L661.2,509.8 L667.2,505.0 L673.2,509.8 L679.2,505.0 L685.2,509.8 L691.2,505.0 L697.2,509.8 L703.2,505.0 L709.2,509.8 L715.2,505.0 L721.2,509.8 L727.2,505.0 L733.2,509.8 L739.2,505.0 L745.2,509.8 L751.2,505.0 L757.2,509.8 L763.2,505.0 L769.2,509.8 L775.2,505.0 L781.2,509.8 L787.2,505.0 L793.2,509.8 L799.2,505.0 L805.2,509.8 L811.2,505.0 L817.2,509.8 L823.2,505.0 L829.2,509.8 L835.2,505.0 L841.2,509.8 L847.2,505.0 L853.2,509.8 L859.2,505.0 L865.2,509.8 L871.2,505.0 L877.2,509.8 L883.2,505.0 L889.2,509.8 L895.2,505.0 L901.2,509.8 L907.2,505.0 L913.2,509.8 L919.2,505.0 L925.2,509.8 L931.2,505.0 L937.2,509.8 L943.2,505.0 L945.5,509.8"/><path d="M273.9,754.6 L279.9,749.8 L285.9,754.6 L291.9,749.8 L297.9,754.6 L303.9,749.8 L309.9,754.6 L315.9,749.8 L321.9,754.6 L327.9,749.8 L333.9,754.6 L339.9,749.8 L345.9,754.6 L351.9,749.8 L357.9,754.6 L363.9,749.8 L369.9,754.6 L375.9,749.8 L381.9,754.6 L387.9,749.8 L393.9,754.6 L399.9,749.8 L405.9,754.6 L411.9,749.8 L417.9,754.6 L423.9,749.8 L429.9,754.6 L435.9,749.8 L441.9,754.6 L447.9,749.8 L453.9,754.6 L459.9,749.8 L465.9,754.6 L471.9,749.8 L477.9,754.6 L483.9,749.8 L489.9,754.6 L495.9,749.8 L501.9,754.6 L507.9,749.8 L513.9,754.6 L519.9,749.8 L525.9,754.6 L531.9,749.8 L537.9,754.6 L543.9,749.8 L549.9,754.6 L555.9,749.8 L561.9,754.6 L567.9,749.8 L573.9,754.6 L579.9,749.8 L585.9,754.6 L591.9,749.8 L597.9,754.6 L603.9,749.8 L609.9,754.6 L615.9,749.8 L621.9,754.6 L627.9,749.8 L633.9,754.6 L639.9,749.8 L645.9,754.6 L651.9,749.8 L657.9,754.6 L663.9,749.8 L669.9,754.6 L675.9,749.8 L681.9,754.6 L687.9,749.8 L693.9,754.6 L699.9,749.8 L705.9,754.6 L711.9,749.8 L717.9,754.6 L723.9,749.8 L729.9,754.6 L735.9,749.8 L741.9,754.6 L747.9,749.8 L748.9,754.6"/></g></svg>
<div class="b" style="left:0.0px;top:0.0px;width:2321.5px;height:47.0px;background:#22252e;"></div>
<div class="b" style="left:0.0px;top:46.5px;width:2321.5px;height:1.5px;background:#3a3d45;"></div>
<div class="b" style="left:0.0px;top:48.0px;width:1782.0px;height:9.0px;background:linear-gradient(#14161b,rgba(20,22,27,0));opacity:.85;"></div>
<div class="b" style="left:14.7px;top:3.0px;width:158.0px;height:38.0px;background:#383d4b;border-radius:9px;"></div>
<div class="b" style="left:186.5px;top:3.0px;width:337.2px;height:38.0px;background:#414654;border-radius:9px;"></div>
</div>
<div class="t" style="left:527.2px;top:92.5px;font-size:24.30px;color:#9b9da4;letter-spacing:0.245px;">main.dart</div>
<svg class="b" style="left:642.2px;top:94.2px;" width="22.0" height="22.0" viewBox="0 0 22 22"><path d="M4.2,4.2 L17.2,17.2 M17.2,4.2 L4.2,17.2" stroke="#9b9da4" stroke-width="2.2"/></svg>
<div class="t" style="left:699.0px;top:92.5px;font-size:24.30px;color:#5cb8f8;letter-spacing:-0.107px;">habit_tracker_page.dart M</div>
<svg class="b" style="left:993.0px;top:94.0px;" width="22.0" height="22.0" viewBox="0 0 22 22"><path d="M4.2,4.2 L17.2,17.2 M17.2,4.2 L4.2,17.2" stroke="#fff" stroke-width="2.4"/></svg>
<svg class="b" style="left:2287.0px;top:131.5px;opacity:.7;" width="90.0" height="27.0" viewBox="0 0 90 27"><rect x="0.0" y="0.0" width="5.6" height="1.6" fill="#c28a2a"/><rect x="7.8" y="0.0" width="25.8" height="1.6" fill="#7d9a5c"/><rect x="0.0" y="2.0" width="5.6" height="1.6" fill="#c28a2a"/><rect x="7.8" y="2.0" width="20.2" height="1.6" fill="#7d9a5c"/><rect x="0.0" y="4.0" width="5.6" height="1.6" fill="#c28a2a"/><rect x="7.8" y="4.0" width="23.5" height="1.6" fill="#7d9a5c"/><rect x="0.0" y="6.0" width="5.6" height="1.6" fill="#c28a2a"/><rect x="7.8" y="6.0" width="24.6" height="1.6" fill="#7d9a5c"/><rect x="0.0" y="10.0" width="4.5" height="1.6" fill="#c28a2a"/><rect x="5.6" y="10.0" width="17.9" height="1.6" fill="#b39a62"/><rect x="24.6" y="10.0" width="6.7" height="1.6" fill="#c28a2a"/><rect x="32.5" y="10.0" width="14.6" height="1.6" fill="#b39a62"/><rect x="2.2" y="12.0" width="4.5" height="1.6" fill="#c28a2a"/><rect x="7.8" y="12.0" width="19.0" height="1.6" fill="#b39a62"/><rect x="28.0" y="12.0" width="4.5" height="1.6" fill="#c28a2a"/><rect x="33.6" y="12.0" width="5.6" height="1.6" fill="#4e7fb0"/><rect x="2.2" y="16.0" width="9.0" height="1.6" fill="#8a4a44"/><rect x="2.2" y="18.0" width="24.6" height="1.6" fill="#b39a62"/><rect x="28.0" y="18.0" width="13.4" height="1.6" fill="#4e7fb0"/><rect x="45.9" y="18.0" width="25.8" height="1.6" fill="#4e7fb0"/><rect x="0.0" y="20.0" width="1.1" height="1.6" fill="#b39a62"/><rect x="0.0" y="24.0" width="4.5" height="1.6" fill="#c28a2a"/><rect x="5.6" y="24.0" width="24.6" height="1.6" fill="#4e7fb0"/><rect x="31.4" y="24.0" width="7.8" height="1.6" fill="#c28a2a"/><rect x="40.3" y="24.0" width="24.6" height="1.6" fill="#b39a62"/><rect x="2.2" y="26.0" width="4.5" height="1.6" fill="#c28a2a"/><rect x="7.8" y="26.0" width="12.3" height="1.6" fill="#b39a62"/><rect x="21.3" y="26.0" width="6.7" height="1.6" fill="#4e7fb0"/></svg>
<div class="b" style="left:2393.0px;top:131.0px;width:1.2px;height:882.0px;background:#33363f;"></div>
<div class="b" style="left:2418.0px;top:83.0px;width:1.3px;height:931.0px;background:#33363f;"></div>
<!-- p_phone -->
<div class="t" style="left:2440.0px;top:92.9px;font-size:24.00px;color:#fff;letter-spacing:-0.016px;">Ads by Partners</div>
<svg class="b" style="left:2630.0px;top:88.0px;" width="34.0" height="34.0" viewBox="0 0 34 34"><circle cx="16.3" cy="16.6" r="12.6" fill="none" stroke="#6b6d72" stroke-width="2.6"/><rect x="15" y="14.5" width="2.7" height="8.5" fill="#6b6d72"/><rect x="15" y="9.6" width="2.7" height="2.8" fill="#6b6d72"/></svg>
<svg class="b" style="left:2780.0px;top:91.0px;" width="28.0" height="28.0" viewBox="0 0 28 28"><path d="M4.5,4.5 L23.5,23.5 M23.5,4.5 L4.5,23.5" stroke="#fff" stroke-width="2.7"/></svg>
<div class="b" style="left:2202.5px;top:158.5px;width:457.5px;height:843.0px;background:#fff;border-radius:44px;box-shadow:0 0 3px rgba(0,0,0,.35);"></div>
<div class="b" style="left:2395.0px;top:173.2px;width:72.0px;height:7.4px;background:#333;border-radius:4px;"></div>
<div class="b" style="left:2216.5px;top:197.5px;width:429.3px;height:763.5px;background:#f4f4f9;overflow:hidden;box-shadow:-1px 0 0 #666,1px 0 0 #666,0 1px 0 #666;">
<div class="b" style="left:0.0px;top:0.0px;width:429.3px;height:67.5px;background:#f8faf3;"></div>
<div class="b" style="left:0.0px;top:0.0px;width:429.3px;height:1.5px;background:#d2d2d2;"></div>
<div class="t" style="left:117.0px;top:22.7px;font-size:25.50px;color:#1b1c1a;letter-spacing:0.206px;">My Habit Tracker</div>
<div class="b" style="left:19.5px;top:86.8px;width:390.5px;height:121.5px;background:linear-gradient(90deg,#69ad61,#72b26a 45%,#90c58c);border-radius:25px;box-shadow:0 5px 14px rgba(80,120,80,.18);"></div>
<div class="t" style="left:43.5px;top:117.7px;font-size:25.50px;color:#fff;font-weight:700;letter-spacing:-0.510px;">Today’s Progress</div>
<div class="t" style="left:43.8px;top:163.1px;font-size:17.70px;color:#fff;letter-spacing:0.999px;">4 of 4 habits completed</div>
<div class="b" style="left:20.0px;top:228.0px;width:389.0px;height:100.3px;background:#fff;border-radius:21px;box-sizing:border-box;border:1px solid #e5e5eb;box-shadow:0 3px 12px rgba(60,60,90,.07);"></div>
<div class="b" style="left:39.9px;top:247.3px;width:61.6px;height:61.6px;background:#f2f3f5;border-radius:15px;"></div>
<svg class="b" style="left:56.3px;top:264.0px;" width="28.6" height="28.6" viewBox="0 0 24 24"><path d="M19.07 4.93l-1.41 1.41C19.1 7.79 20 9.79 20 12c0 4.42-3.58 8-8 8s-8-3.58-8-8c0-4.08 3.05-7.44 7-7.93v2.02C8.16 6.57 6 9.03 6 12c0 3.31 2.69 6 6 6s6-2.69 6-6c0-1.66-.67-3.16-1.76-4.24l-1.41 1.41C15.55 9.9 16 10.9 16 12c0 2.21-1.79 4-4 4s-4-1.79-4-4c0-1.86 1.28-3.41 3-3.86v2.14c-.6.35-1 .98-1 1.72 0 1.1.9 2 2 2s2-.9 2-2c0-.74-.4-1.38-1-1.72V2h-1C6.48 2 2 6.48 2 12s4.48 10 10 10 10-4.48 10-10c0-2.76-1.12-5.26-2.93-7.07z" fill="#9c9c9c"/></svg>
<div class="t" style="left:118.7px;top:252.0px;font-size:22.00px;color:#1a1f2e;font-weight:700;letter-spacing:-0.737px;">Read 10 pages</div>
<div class="t" style="left:118.7px;top:289.7px;font-size:17.30px;color:#6b7280;letter-spacing:-0.304px;">Streak: 4</div>
<div class="b" style="left:283.8px;top:259.2px;width:105.7px;height:38.0px;background:#616161;border-radius:19px;"></div>
<div class="t" style="left:300.4px;top:270.4px;font-size:17.60px;color:#fff;letter-spacing:-0.353px;">Complete</div>
<div class="b" style="left:20.0px;top:343.5px;width:389.0px;height:102.0px;background:#fff;border-radius:21px;box-sizing:border-box;border:1.5px solid #b7e1bd;box-shadow:0 3px 12px rgba(60,60,90,.07);"></div>
<div class="b" style="left:39.9px;top:363.7px;width:61.6px;height:61.6px;background:#eaf4ea;border-radius:15px;"></div>
<svg class="b" style="left:54.5px;top:378.5px;" width="32.0" height="32.0" viewBox="0 0 32 32"><path d="M6.5,17.3 L13.2,23.8 L26.5,9.5" fill="none" stroke="#2e7d32" stroke-width="2.6"/></svg>
<div class="t" style="left:118.7px;top:368.8px;font-size:22.00px;color:#1a1f2e;font-weight:700;letter-spacing:-0.782px;">Morning stretch</div>
<div class="t" style="left:118.7px;top:405.5px;font-size:17.30px;color:#6b7280;letter-spacing:-0.304px;">Streak: 7</div>
<div class="b" style="left:317.5px;top:375.6px;width:72.0px;height:38.0px;background:#437d3c;border-radius:19px;"></div>
<div class="t" style="left:334.0px;top:386.8px;font-size:17.60px;color:#fff;letter-spacing:-0.769px;">Done</div>
<div class="b" style="left:20.0px;top:461.0px;width:389.0px;height:100.3px;background:#fff;border-radius:21px;box-sizing:border-box;border:1px solid #e5e5eb;box-shadow:0 3px 12px rgba(60,60,90,.07);"></div>
<div class="b" style="left:39.9px;top:480.4px;width:61.6px;height:61.6px;background:#f2f3f5;border-radius:15px;"></div>
<svg class="b" style="left:56.3px;top:497.1px;" width="28.6" height="28.6" viewBox="0 0 24 24"><path d="M19.07 4.93l-1.41 1.41C19.1 7.79 20 9.79 20 12c0 4.42-3.58 8-8 8s-8-3.58-8-8c0-4.08 3.05-7.44 7-7.93v2.02C8.16 6.57 6 9.03 6 12c0 3.31 2.69 6 6 6s6-2.69 6-6c0-1.66-.67-3.16-1.76-4.24l-1.41 1.41C15.55 9.9 16 10.9 16 12c0 2.21-1.79 4-4 4s-4-1.79-4-4c0-1.86 1.28-3.41 3-3.86v2.14c-.6.35-1 .98-1 1.72 0 1.1.9 2 2 2s2-.9 2-2c0-.74-.4-1.38-1-1.72V2h-1C6.48 2 2 6.48 2 12s4.48 10 10 10 10-4.48 10-10c0-2.76-1.12-5.26-2.93-7.07z" fill="#9c9c9c"/></svg>
<div class="t" style="left:118.7px;top:485.0px;font-size:22.00px;color:#1a1f2e;font-weight:700;letter-spacing:-1.129px;">Study English</div>
<div class="t" style="left:118.7px;top:522.7px;font-size:17.30px;color:#6b7280;letter-spacing:-0.236px;">Streak: 12</div>
<div class="b" style="left:283.8px;top:492.2px;width:105.7px;height:38.0px;background:#616161;border-radius:19px;"></div>
<div class="t" style="left:300.4px;top:503.4px;font-size:17.60px;color:#fff;letter-spacing:-0.353px;">Complete</div>
<div class="b" style="left:20.0px;top:578.0px;width:389.0px;height:130.5px;background:#fff;border-radius:21px;box-sizing:border-box;border:1px solid #e5e5eb;box-shadow:0 3px 12px rgba(60,60,90,.07);"></div>
<div class="b" style="left:39.9px;top:612.5px;width:61.6px;height:61.6px;background:#f2f3f5;border-radius:15px;"></div>
<svg class="b" style="left:56.3px;top:629.2px;" width="28.6" height="28.6" viewBox="0 0 24 24"><path d="M19.07 4.93l-1.41 1.41C19.1 7.79 20 9.79 20 12c0 4.42-3.58 8-8 8s-8-3.58-8-8c0-4.08 3.05-7.44 7-7.93v2.02C8.16 6.57 6 9.03 6 12c0 3.31 2.69 6 6 6s6-2.69 6-6c0-1.66-.67-3.16-1.76-4.24l-1.41 1.41C15.55 9.9 16 10.9 16 12c0 2.21-1.79 4-4 4s-4-1.79-4-4c0-1.86 1.28-3.41 3-3.86v2.14c-.6.35-1 .98-1 1.72 0 1.1.9 2 2 2s2-.9 2-2c0-.74-.4-1.38-1-1.72V2h-1C6.48 2 2 6.48 2 12s4.48 10 10 10 10-4.48 10-10c0-2.76-1.12-5.26-2.93-7.07z" fill="#9c9c9c"/></svg>
<div class="t" style="left:118.7px;top:601.7px;font-size:22.00px;color:#1a1f2e;font-weight:700;letter-spacing:-0.516px;">Walk 20</div>
<div class="t" style="left:118.7px;top:632.2px;font-size:22.00px;color:#1a1f2e;font-weight:700;letter-spacing:-0.835px;">minutes</div>
<div class="t" style="left:118.7px;top:670.3px;font-size:17.30px;color:#6b7280;letter-spacing:-0.304px;">Streak: 2</div>
<div class="b" style="left:283.8px;top:624.3px;width:105.7px;height:38.0px;background:#616161;border-radius:19px;"></div>
<div class="t" style="left:300.4px;top:635.5px;font-size:17.60px;color:#fff;letter-spacing:-0.353px;">Complete</div>
</div>
<div class="b" style="left:2665.0px;top:141.0px;width:57.5px;height:548.5px;background:#fff;border-radius:7px;box-shadow:0 2px 5px rgba(0,0,0,.3);"></div>
<svg class="b" style="left:2679.0px;top:182.7px;" width="30.0" height="30.0" viewBox="0 0 24 24"><path d="M19 13H5v-2h14v2z" fill="#455a64"/></svg>
<svg class="b" style="left:2677.0px;top:226.3px;" width="34.0" height="34.0" viewBox="0 0 24 24"><path d="M20 11H7.83l5.59-5.59L12 4l-8 8 8 8 1.41-1.41L7.83 13H20v-2z" fill="#455a64"/></svg>
<svg class="b" style="left:2677.0px;top:284.0px;" width="34.0" height="34.0" viewBox="0 0 24 24"><path d="M12 4l-1.41 1.41L16.17 11H4v2h12.17l-5.58 5.59L12 20l8-8z" fill="#455a64"/></svg>
<svg class="b" style="left:2677.0px;top:341.0px;" width="34.0" height="34.0" viewBox="0 0 24 24"><path d="M12 6v3l4-4-4-4v3c-4.42 0-8 3.58-8 8 0 1.57.46 3.03 1.24 4.26L6.7 14.8c-.45-.83-.7-1.79-.7-2.8 0-3.31 2.69-6 6-6zm6.76 1.74L17.3 9.2c.44.84.7 1.79.7 2.8 0 3.31-2.69 6-6 6v-3l-4 4 4 4v-3c4.42 0 8-3.58 8-8 0-1.57-.46-3.03-1.24-4.26z" fill="#455a64"/></svg>
<svg class="b" style="left:2677.5px;top:398.5px;" width="33.0" height="33.0" viewBox="0 0 24 24"><path d="M16.48 2.52c3.27 1.55 5.61 4.72 5.97 8.48h1.5C23.44 4.84 18.29 0 12 0l-.66.03 3.81 3.81 1.33-1.32zm-6.25-.77c-.59-.59-1.54-.59-2.12 0L1.75 8.11c-.59.59-.59 1.54 0 2.12l12.02 12.02c.59.59 1.54.59 2.12 0l6.36-6.36c.59-.59.59-1.54 0-2.12L10.23 1.75zm4.6 19.44L2.81 9.17l6.36-6.36 12.02 12.02-6.36 6.36zm-7.31.29C4.25 19.94 1.91 16.76 1.55 13H.05C.56 19.16 5.71 24 12 24l.66-.03-3.81-3.81-1.33 1.32z" fill="#455a64"/></svg>
<svg class="b" style="left:2677.0px;top:453.4px;" width="34.0" height="38.0" viewBox="0 0 34 38"><g fill="none" stroke="#455a64" stroke-width="2.2"><rect x="6.6" y="3.2" width="20.8" height="31.6" rx="3.2"/><path d="M12,27.2 L22,10.8" stroke-width="1.8"/><path d="M11.2,22.6 L11.6,27.8 L16.2,25.6 M17.8,12.4 L22.4,10.2 L22.8,15.4" stroke-width="1.8"/></g></svg>
<svg class="b" style="left:2677.0px;top:512.2px;" width="34.0" height="34.0" viewBox="0 0 24 24"><path d="M19 19H5V5h7V3H5c-1.11 0-2 .9-2 2v14c0 1.1.89 2 2 2h14c1.1 0 2-.9 2-2v-7h-2v7zM14 3v2h3.59l-9.83 9.83 1.41 1.41L19 6.41V10h2V3h-7z" fill="#455a64"/></svg>
<svg class="b" style="left:2678.0px;top:570.0px;" width="32.0" height="32.0" viewBox="0 0 32 32"><g fill="none" stroke="#455a64" stroke-width="2.4"><rect x="4.2" y="4.2" width="7.6" height="7.6"/><rect x="20.2" y="4.2" width="7.6" height="7.6"/><rect x="4.2" y="20.2" width="7.6" height="7.6"/></g><g fill="#455a64"><rect x="15" y="3" width="3" height="3"/><rect x="15" y="9" width="3" height="4"/><rect x="15" y="15" width="4" height="3"/><rect x="3" y="15" width="4" height="3"/><rect x="9" y="15" width="3" height="3"/><rect x="21" y="15" width="3" height="3"/><rect x="26" y="15" width="3" height="4"/><rect x="18" y="19" width="4" height="4"/><rect x="23" y="21" width="3" height="3"/><rect x="15" y="23" width="3" height="6"/><rect x="20" y="26" width="4" height="3"/><rect x="26" y="24" width="3" height="5"/></g></svg>
<svg class="b" style="left:2677.0px;top:626.5px;" width="34.0" height="34.0" viewBox="0 0 24 24"><path d="M13 3h-2v10h2V3zm4.83 2.17l-1.42 1.42C17.99 7.86 19 9.81 19 12c0 3.87-3.13 7-7 7s-7-3.13-7-7c0-2.19 1.01-4.14 2.58-5.42L6.17 5.17C4.23 6.82 3 9.26 3 12c0 4.97 4.03 9 9 9s9-4.03 9-9c0-2.74-1.23-5.18-3.17-6.83z" fill="#455a64"/></svg>
<!-- p_bottom -->
<div class="b" style="left:82.0px;top:80.0px;width:2738.0px;height:3.0px;background:linear-gradient(90deg,#b57dff 0%,#77a0fb 50%,#5bbef8 92%,#56c3f8 100%);"></div>
<div class="b" style="left:82.0px;top:80.0px;width:3.0px;height:1279.0px;background:linear-gradient(180deg,#b57dff 0%,#7cc3f6 50%,#7dfce8 100%);"></div>
<div class="b" style="left:82.0px;top:1355.0px;width:2738.0px;height:4.0px;background:linear-gradient(90deg,#7dfce8 0%,#7abcf0 50%,#b57bee 100%);"></div>
<div class="b" style="left:85.0px;top:83.0px;width:2735.0px;height:1.0px;background:#1d1e22;"></div>
<div class="b" style="left:85.0px;top:1354.0px;width:2735.0px;height:1.0px;background:#1c1c1f;"></div>
<div class="b" style="left:2600px;top:80px;width:220px;height:230px;overflow:hidden;">
<div class="b" style="left:0;top:0;width:220px;height:230px;background:#22252e;clip-path:polygon(106.5px 0,220px 0,220px 4px,110.5px 4px);"></div>
<div class="b" style="left:-71.0px;top:52.2px;width:440px;height:44px;transform:rotate(45deg);background:linear-gradient(90deg,#4dabe5 0%,#55b4ea 26%,#63c2f1 40%,#84defb 53%,#6ccbf6 66%,#55b5ec 82%,#4aa9e4 100%);box-shadow:0 1px 4px rgba(0,0,0,.4);"></div>
<div class="b" style="left:30.5px;top:53.4px;width:240px;height:44px;transform:rotate(45deg);text-align:center;line-height:43px;font-size:24.8px;-webkit-text-stroke:0.55px #1f5a82;color:#1f5a82;white-space:pre;letter-spacing:1.639px;text-shadow:0.6px 0.8px 1.2px rgba(10,40,70,.45);">Sandbox Mode</div>
</div>
<div class="b" style="left:498.5px;top:1013.3px;width:2321.5px;height:5.7px;background:#3a3d45;"></div>
<div class="b" style="left:1513.0px;top:1019.0px;width:123.7px;height:60.0px;background:#30343f;"></div>
<div class="b" style="left:498.5px;top:1079.0px;width:2321.5px;height:1.2px;background:#3a3d45;"></div>
<div class="b" style="left:1513.0px;top:1078.3px;width:123.7px;height:1.6px;background:#fff;"></div>
<div class="t" style="left:540.3px;top:1036.1px;font-size:24.00px;color:#ececec;letter-spacing:0.208px;">Outputs</div>
<div class="t" style="left:707.5px;top:1036.1px;font-size:24.00px;color:#ececec;letter-spacing:-0.047px;">Analyzer</div>
<div class="t" style="left:882.0px;top:1036.1px;font-size:24.00px;color:#ececec;letter-spacing:0.077px;">Pub Commands</div>
<div class="t" style="left:1136.5px;top:1036.1px;font-size:24.00px;color:#ececec;letter-spacing:0.597px;">Tests</div>
<div class="t" style="left:1277.0px;top:1036.1px;font-size:24.00px;color:#ececec;letter-spacing:0.694px;">Tools</div>
<div class="t" style="left:1418.0px;top:1036.1px;font-size:24.00px;color:#ececec;letter-spacing:0.226px;">Build</div>
<div class="t" style="left:1554.0px;top:1036.1px;font-size:24.00px;color:#ececec;letter-spacing:-0.676px;">Run</div>
<div class="t" style="left:1678.0px;top:1036.1px;font-size:24.00px;color:#ececec;letter-spacing:0.614px;">Todo</div>
<div class="t" style="left:1814.0px;top:1036.1px;font-size:24.00px;color:#ececec;letter-spacing:0.227px;">Git History</div>
<svg class="b" style="left:2783.0px;top:1034.0px;" width="14.0" height="32.0" viewBox="0 0 14 32"><circle cx="7" cy="5.5" r="2.5" fill="#fff"/><circle cx="7" cy="15.2" r="2.5" fill="#fff"/><circle cx="7" cy="24.9" r="2.5" fill="#fff"/></svg>
<svg class="b" style="left:516.0px;top:1100.0px;" width="24.0" height="22.0" viewBox="0 0 24 22"><path d="M2,6.6 L20.5,6.6 M2,11.6 L20.5,11.6 M2,16.6 L14.5,16.6" stroke="#d5d5d5" stroke-width="1.9"/></svg>
<div class="t" style="left:548.3px;top:1099.1px;font-size:25.20px;color:#cfcfcf;font-family:'Liberation Mono', monospace;letter-spacing:-0.673px;">3 module(s) were hot-reloaded.</div>
<div class="b" style="left:1922.0px;top:1274.0px;width:241.5px;height:66.0px;background:#2a3f52;border:1.2px solid #3b8ed2;border-radius:11px;box-sizing:border-box;"></div>
<div class="b" style="left:2183.6px;top:1274.0px;width:236.1px;height:66.0px;background:#2a3f52;border:1.2px solid #3b8ed2;border-radius:11px;box-sizing:border-box;"></div>
<div class="b" style="left:2440.7px;top:1274.0px;width:275.7px;height:66.0px;background:#2a3f52;border:1.2px solid #3b8ed2;border-radius:11px;box-sizing:border-box;"></div>
<div class="t" style="left:1994.8px;top:1293.3px;font-size:28.00px;color:#fff;letter-spacing:-0.369px;">Fix my Error</div>
<div class="t" style="left:2256.5px;top:1293.3px;font-size:28.00px;color:#fff;letter-spacing:-0.274px;">AI Assistant</div>
<div class="t" style="left:2513.6px;top:1293.3px;font-size:28.00px;color:#fff;letter-spacing:-0.487px;">Documentation</div>
<svg class="b" style="left:1946.0px;top:1288.0px;" width="36.0" height="38.0" viewBox="0 0 36 38"><g fill="none" stroke="#fff" stroke-width="2.2" stroke-linecap="round"><path d="M12,12.5 C12.8,9.8 15,8.6 17.6,8.6 C20.2,8.6 22.4,9.8 23.2,12.5"/><path d="M24.6,16.2 C25.4,18.2 25.6,20.4 25.2,22.8 C24.4,27 21.4,29.4 17.6,29.4 C15.8,29.4 14.2,28.9 12.9,27.9"/><path d="M13.6,8.8 L11.2,6 M21.6,8.8 L24,6 M25.8,18.2 L30.6,17 M25.6,23.6 L30.6,25 M23.2,28 L26.8,31.2 M9.6,17.8 L5,16.6 M9.6,22.8 L5,24"/><path d="M31,4.6 L4.6,34" stroke-width="2.6"/></g></svg>
<svg class="b" style="left:2207.0px;top:1289.0px;" width="38.0" height="36.0" viewBox="0 0 38 36"><g fill="none" stroke="#fff" stroke-width="2.3" stroke-linejoin="round" stroke-linecap="round"><path d="M19,6.5 C17.6,4.2 14.6,3.6 12.4,5 C10.8,6 10.2,7.6 10.4,9.2 C7.6,9.8 5.6,12.2 5.8,15.2 C5.9,16.8 6.6,18.2 7.6,19.2 C6.6,21.4 7.2,24.2 9.4,25.6 C9.8,28.8 12.6,31 15.8,30.6 C17.2,30.4 18.3,29.7 19,28.8 Z"/><path d="M19,6.5 C20.4,4.2 23.4,3.6 25.6,5 C27.2,6 27.8,7.6 27.6,9.2 C30.4,9.8 32.4,12.2 32.2,15.2 C32.1,16.8 31.4,18.2 30.4,19.2 C31.4,21.4 30.8,24.2 28.6,25.6 C28.2,28.8 25.4,31 22.2,30.6 C20.8,30.4 19.7,29.7 19,28.8"/><path d="M19,6.5 L19,28.8 M10.4,9.4 C10.8,11.4 12.2,12.6 14,12.8 M27.6,9.4 C27.2,11.4 25.8,12.6 24,12.8 M7.8,19.2 C9.2,20.4 11,20.8 12.6,20.2 M30.2,19.2 C28.8,20.4 27,20.8 25.4,20.2 M14.6,24.4 C14.4,22.6 15.4,21 17.2,20.4 M23.4,24.4 C23.6,22.6 22.6,21 20.8,20.4" stroke-width="1.9"/></g></svg>
<svg class="b" style="left:2469.0px;top:1291.8px;" width="26.0" height="32.0" viewBox="0 0 26 32"><path d="M0,15.9 L16.2,0 L25,0 L4.4,20.4 Z" fill="#c3c7cb"/><path d="M7.9,23.2 L16.2,14.8 L25,14.8 L12.4,27.4 Z" fill="#c3c7cb"/><path d="M7.9,23.2 L12.3,18.8 L25,31 L16.2,31 Z" fill="#d9dbdd"/><path d="M7.9,23.2 L12.3,18.8 L16.8,23.2 L12.3,27.5 Z" fill="#eeeeee"/></svg>
<div class="b" style="left:2738.0px;top:1274.0px;width:68.0px;height:67.5px;background:#4ba3e3;border-radius:13px;box-shadow:0 3px 10px rgba(0,0,0,.45);"></div>
<svg class="b" style="left:2753.4px;top:1291.2px;" width="36.0" height="34.0" viewBox="0 0 36 34"><path d="M6,2.5 L29.5,2.5 Q32.6,2.5 32.6,5.6 L32.6,22.4 Q32.6,25.5 29.5,25.5 L10.5,25.5 L4.2,31.2 L4.2,5.6 Q4.2,2.5 6,2.5 Z" fill="#fff"/><path d="M9.6,9.3 L27,9.3 M9.6,14.1 L27,14.1 M9.6,18.9 L21.2,18.9" stroke="#4ba3e3" stroke-width="2.5"/></svg>
<div class="b" style="left:0.0px;top:1359.0px;width:2820.0px;height:37.0px;background:#3866cc;"></div>
<div class="b" style="left:0.0px;top:1359.0px;width:2820.0px;height:1.5px;background:#335fc6;"></div>
<svg class="b" style="left:28.0px;top:1362.0px;" width="26.0" height="32.0" viewBox="0 0 26 32"><g fill="none" stroke="#e6e3dd" stroke-width="2"><circle cx="7.5" cy="7.3" r="2.7"/><circle cx="7.5" cy="24" r="2.7"/><circle cx="19.6" cy="9" r="2.7"/><path d="M7.5,10 L7.5,21.3 M19.6,11.7 C19.2,15 16.5,15.8 12.5,16.4 C9.5,16.9 7.8,18 7.5,20.6"/></g></svg>
<div class="t" style="left:68.8px;top:1365.6px;font-size:22.00px;color:#e6e3dd;letter-spacing:-0.167px;">No branch</div>
<svg class="b" style="left:176.0px;top:1368.0px;" width="20.0" height="18.0" viewBox="0 0 20 18"><path d="M3.2,5.2 L9.8,11.6 L16.4,5.2" fill="none" stroke="#e6e3dd" stroke-width="2.5"/></svg>
<div class="t" style="left:241.5px;top:1366.6px;font-size:21.50px;color:#e6e3dd;letter-spacing:-0.055px;">Analyzer Ready</div>
<div class="b" style="left:1301.0px;top:1362.0px;width:222.0px;height:31.0px;background:#3d70df;border-radius:8px;"></div>
<div class="t" style="left:1315.0px;top:1366.1px;font-size:23.50px;color:#e9ebf2;letter-spacing:0.222px;-webkit-text-stroke:0.55px #e9ebf2;">Discover Premium</div>
<div class="b" style="left:2298.5px;top:1361.8px;width:204.0px;height:30.6px;background:#3a6fe0;border-radius:9px;"></div>
<div class="t" style="left:2348.5px;top:1366.1px;font-size:23.50px;color:#e9ebf2;letter-spacing:0.470px;-webkit-text-stroke:0.55px #e9ebf2;">Shortcuts</div>
<div class="b" style="left:2509.5px;top:1361.8px;width:204.0px;height:30.6px;background:#3a6fe0;border-radius:9px;"></div>
<div class="t" style="left:2538.5px;top:1366.1px;font-size:23.50px;color:#e9ebf2;letter-spacing:0.261px;-webkit-text-stroke:0.55px #e9ebf2;">Flutter 3.29</div>
<svg class="b" style="left:2666.0px;top:1368.0px;" width="22.0" height="18.0" viewBox="0 0 22 18"><path d="M3.6,5 L10.6,11.8 L17.6,5" fill="none" stroke="#e4ecff" stroke-width="2.6"/></svg>
<div class="b" style="left:2720.7px;top:1361.8px;width:57.5px;height:30.6px;background:#3a6fe0;border-radius:9px;"></div>
<svg class="b" style="left:2736.0px;top:1364.0px;" width="28.0" height="28.0" viewBox="0 0 28 28"><circle cx="13.3" cy="13.7" r="10.4" fill="none" stroke="#e8e4dc" stroke-width="2"/></svg>
<div class="t" style="left:2744.3px;top:1370.7px;font-size:17.00px;color:#e8e4dc;font-weight:700;">?</div>
<div class="b" style="left:2785.0px;top:1361.8px;width:40.0px;height:30.6px;background:#3a6fe0;border-radius:9px;"></div>
<div class="b" style="left:2794.0px;top:1369.5px;width:17.0px;height:17.0px;background:#8fd47e;border-radius:50%;"></div>
</div>
</body></html>
